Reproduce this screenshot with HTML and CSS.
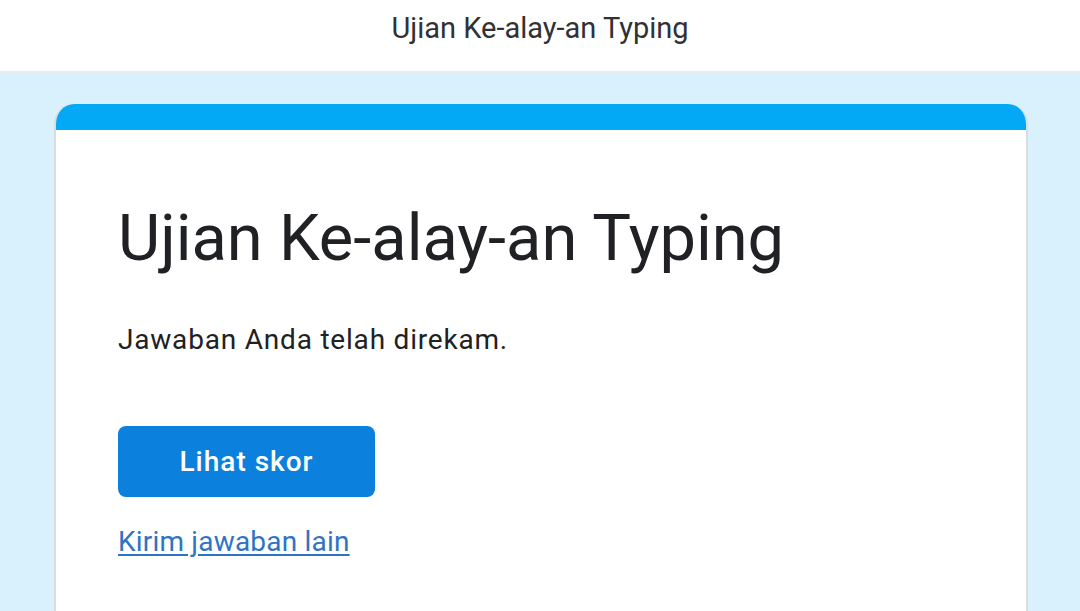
FILE: index.html
```html
<!DOCTYPE html>
<html>
<head>
<meta charset="utf-8">
<link rel="stylesheet" href="styles.css">
</head>
<body>
<header class="topbar">Ujian Ke-alay-an Typing</header>
<main class="page">
  <section class="card">
    <div class="card-accent"></div>
    <div class="card-body">
      <h1 class="title">Ujian Ke-alay-an Typing</h1>
      <p class="message">Jawaban Anda telah direkam.</p>
      <a class="btn" href="#">Lihat skor</a>
      <a class="link" href="#">Kirim jawaban lain</a>
    </div>
  </section>
</main>
</body>
</html>
```
FILE: styles.css
```css
html, body {
  margin: 0;
  padding: 0;
  height: 100%;
  overflow: hidden;
}
body {
  font-family: Roboto, "Noto Sans", sans-serif;
  background: #d9f1fc;
  color: #202124;
}
.topbar {
  height: 73px;
  box-sizing: border-box;
  background: #ffffff;
  border-bottom: 2px solid #e6edf0;
  display: flex;
  align-items: center;
  justify-content: center;
  font-size: 29px;
  color: #303134;
  padding-bottom: 16px;
}
.page {
  padding: 31px 52px 0 54px;
}
.card {
  background: #ffffff;
  border-radius: 20px 20px 0 0;
  overflow: hidden;
  height: 560px;
  border-left: 2px solid #dadce0;
  border-right: 2px solid #dadce0;
  box-sizing: border-box;
}
.card-accent {
  height: 26px;
  background: #03a9f4;
  margin: 0 -2px;
}
.card-body {
  padding: 68px 62px 0 62px;
  display: flex;
  flex-direction: column;
  align-items: flex-start;
}
.title {
  margin: 0;
  font-size: 65px;
  font-weight: 400;
  line-height: 80px;
}
.message {
  margin: 44px 0 0 0;
  font-size: 28px;
  line-height: 36px;
  letter-spacing: 0.8px;
}
.btn {
  margin-top: 68px;
  width: 257px;
  height: 71px;
  border-radius: 8px;
  background: #0b80dd;
  color: #ffffff;
  font-size: 28px;
  font-weight: 500;
  text-decoration: none;
  display: flex;
  align-items: center;
  justify-content: center;
  letter-spacing: 1px;
}
.link {
  margin-top: 27px;
  font-size: 28px;
  color: #2f74c4;
  text-decoration: underline;
  text-underline-offset: 3px;
  line-height: 36px;
  letter-spacing: 0.2px;
}
```
